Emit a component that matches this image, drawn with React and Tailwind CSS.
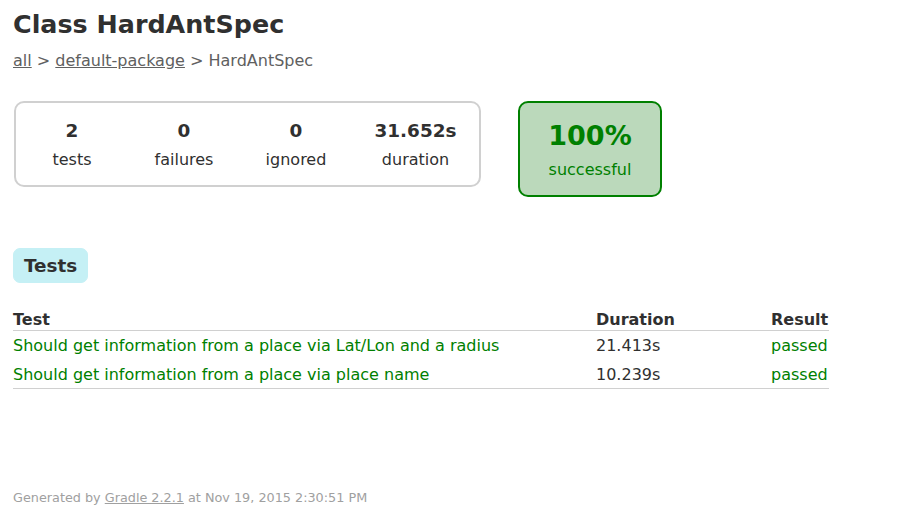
export default function App() {
  return (
    <div className="min-h-screen bg-white text-[#303030] font-['DejaVu_Sans',sans-serif] text-[16px] leading-[19px] pl-[13px] pt-[9px]">
      <h1 className="m-0 text-[25.4px] leading-[30px] font-bold">Class HardAntSpec</h1>
      <div className="mt-[12px] text-[#606060]">
        <a className="underline text-[#606060]">all</a> &gt;{" "}
        <a className="underline text-[#606060]">default-package</a> &gt; HardAntSpec
      </div>

      <div className="mt-[31px] ml-[1px] flex items-start">
        <div className="flex border-2 border-[#d0d0d0] rounded-[10px] p-0">
          {[
            ["2", "tests", "w-[112px]"],
            ["0", "failures", "w-[112px]"],
            ["0", "ignored", "w-[112px]"],
            ["31.652s", "duration", "w-[127px]"],
          ].map(([v, l, w]) => (
            <div key={l} className={`${w} pt-[17px] pb-[16px] text-center`}>
              <div className="text-[18.4px] leading-[22px] font-bold mb-[8px]">{v}</div>
              <div className="leading-[19px]">{l}</div>
            </div>
          ))}
        </div>
        <div className="ml-[37px] w-[144px] border-2 border-[#008000] bg-[#bbd9bb] rounded-[10px] pt-[16px] pb-[16px] text-center text-[#008000]">
          <div className="text-[27px] leading-[33px] font-bold mb-[8px]">100%</div>
          <div className="leading-[19px]">successful</div>
        </div>
      </div>

      <div className="mt-[51px] flex">
        <div className="border border-[#c5f0f5] bg-[#c5f0f5] rounded-[7px] px-[10px] pt-[6px] pb-[5px]">
          <h2 className="m-0 text-[18.4px] leading-[22px] font-bold">Tests</h2>
        </div>
      </div>

      <div className="mt-[26px] w-[816px]">
        <div className="grid grid-cols-[583px_175px_58px] border-b border-[#d0d0d0] py-[1px] font-bold">
          <div>Test</div>
          <div>Duration</div>
          <div>Result</div>
        </div>
        {[
          ["Should get information from a place via Lat/Lon and a radius", "21.413s"],
          ["Should get information from a place via place name", "10.239s"],
        ].map(([n, d], i) => (
          <div
            key={n}
            className={`grid grid-cols-[583px_175px_58px] h-[29px] items-center ${i === 1 ? "border-b border-[#d0d0d0]" : ""}`}
          >
            <div className="text-[#008000]">{n}</div>
            <div>{d}</div>
            <div className="text-[#008000]">passed</div>
          </div>
        ))}
      </div>

      <div className="mt-[101px] text-[12.8px] leading-[15px] text-[#a0a0a0]">
        Generated by <a className="underline text-[#a0a0a0]">Gradle 2.2.1</a> at Nov 19, 2015 2:30:51 PM
      </div>
    </div>
  );
}
